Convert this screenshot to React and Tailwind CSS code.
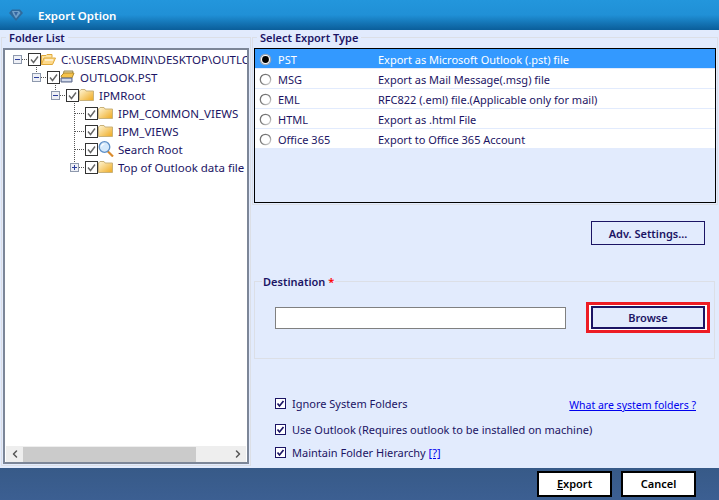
import { ChevronLeft, ChevronRight } from 'lucide-react';

const EXPORT_TYPES = [
  { name: 'PST', desc: 'Export as Microsoft Outlook (.pst) file', selected: true },
  { name: 'MSG', desc: 'Export as Mail Message(.msg) file' },
  { name: 'EML', desc: 'RFC822 (.eml) file.(Applicable only for mail)' },
  { name: 'HTML', desc: 'Export as .html File' },
  { name: 'Office 365', desc: 'Export to Office 365 Account' },
];

const TREE = [
  { level: 0, label: 'C:\\USERS\\ADMIN\\DESKTOP\\OUTLOOK', icon: 'open', toggle: '-' },
  { level: 1, label: 'OUTLOOK.PST', icon: 'pst', toggle: '-' },
  { level: 2, label: 'IPMRoot', icon: 'folder', toggle: '-' },
  { level: 3, label: 'IPM_COMMON_VIEWS', icon: 'folder' },
  { level: 3, label: 'IPM_VIEWS', icon: 'folder' },
  { level: 3, label: 'Search Root', icon: 'search' },
  { level: 3, label: 'Top of Outlook data file', icon: 'folder', toggle: '+' },
];

function TitleIcon() {
  return (
    <svg width="16" height="16" viewBox="0 0 16 16" className="shrink-0">
      <path d="M1 6 L4 2.5 H12 L15 6 L8 14 Z" fill="#2f6a9c" />
      <path d="M4 4 H11 L12.5 6 L8 11.5 L5 7 Z" fill="#6f9fc9" />
      <path d="M6 5 H10 L8 9 Z" fill="#3566a0" />
    </svg>
  );
}

function Toggle({ sign }) {
  return (
    <svg width="9" height="9" viewBox="0 0 9 9" className="block shrink-0">
      <rect x="0.5" y="0.5" width="8" height="8" fill="#eef0f6" stroke="#8e99ad" />
      <path d="M2 4.5H7" stroke="#2c3f9c" />
      {sign === '+' && <path d="M4.5 2V7" stroke="#2c3f9c" />}
    </svg>
  );
}

function TreeCheck() {
  return (
    <svg width="13" height="13" viewBox="0 0 13 13" className="shrink-0">
      <rect x="0.5" y="0.5" width="12" height="12" fill="#fff" stroke="#333" />
      <path d="M3 6.5 L5.5 9.5 L10 3.5" fill="none" stroke="#666" strokeWidth="1.4" />
    </svg>
  );
}

function NodeIcon({ type }) {
  if (type === 'open') {
    return (
      <svg width="15" height="13" viewBox="0 0 15 13" className="shrink-0">
        <path d="M0.5 11.5V2.5H5L6 1.5H11V4.5" fill="#fde3a0" stroke="#e0a93a" />
        <path d="M0.5 11.5L3 5H14.5L11.5 11.5Z" fill="#fdd98a" stroke="#e0a93a" />
        <path d="M4 7H12" stroke="#fff" />
      </svg>
    );
  }
  if (type === 'pst') {
    return (
      <svg width="15" height="14" viewBox="0 0 15 14" className="shrink-0">
        <path d="M4 1H13L12 5H3Z" fill="#e9d9a6" stroke="#9b8a55" />
        <path d="M1 6L4 3H14L12 8H2Z" fill="#f6c34b" stroke="#b18a2c" />
        <path d="M1 8H12V12H1Z" fill="#a9b7d6" stroke="#5e6b8a" />
        <path d="M2 10H11" stroke="#fff" />
      </svg>
    );
  }
  if (type === 'search') {
    return (
      <svg width="16" height="16" viewBox="0 0 16 16" className="shrink-0">
        <path d="M9.5 10L15 15.5" stroke="#d98a2b" strokeWidth="2.2" />
        <circle cx="6.5" cy="6" r="5.3" fill="#d5e9fb" stroke="#5d8fc7" strokeWidth="1.3" />
        <path d="M3.5 5.5A3 3 0 0 1 6.5 3" stroke="#fff" strokeWidth="1.2" fill="none" />
      </svg>
    );
  }
  return (
    <svg width="15" height="12" viewBox="0 0 15 12" className="shrink-0">
      <defs>
        <linearGradient id="folderFill" x1="0" y1="0" x2="1" y2="1">
          <stop offset="0" stopColor="#fff6d6" />
          <stop offset="1" stopColor="#eea91e" />
        </linearGradient>
      </defs>
      <path d="M0.5 11.5V2L2 0.5H6L7 2H14.5V11.5Z" fill="url(#folderFill)" stroke="#c9b27a" />
    </svg>
  );
}

function Legend({ children }) {
  return <legend className="ml-[3px] px-[3px] text-[11px] leading-[13px] font-semibold text-[#1b1464]">{children}</legend>;
}

function FolderTree() {
  return (
    <div className="relative flex-1 min-h-0 bg-white border-2 border-[#7c8698] flex flex-col overflow-hidden">
      {/* connector lines of the tree */}
      <svg className="absolute left-0 top-0 pointer-events-none" width="120" height="130">
        <g stroke="#555" strokeDasharray="1 1" fill="none">
          <path d="M17 9.5H23" />
          <path d="M31.5 15V22" />
          <path d="M36 27.5H42" />
          <path d="M50.5 33V41" />
          <path d="M55 45.5H61" />
          <path d="M69.5 53V113" />
          <path d="M70 63.5H80" />
          <path d="M70 81.5H80" />
          <path d="M70 99.5H80" />
          <path d="M74 117.5H80" />
        </g>
      </svg>
      <div className="flex-1 min-h-0">
        {TREE.map((n) => (
          <div key={n.label} className={`relative flex items-center whitespace-nowrap h-[18px] ${n.level === 0 ? 'pl-[8px]' : n.level === 1 ? 'pl-[27px]' : n.level === 2 ? 'pl-[46px]' : 'pl-[65px]'}`}>
            <span className="w-[15px] shrink-0">{n.toggle && <Toggle sign={n.toggle} />}</span>
            <TreeCheck />
            <span className="w-[15px] shrink-0 flex justify-center"><NodeIcon type={n.icon} /></span>
            <span className="ml-[5px] text-[11.5px] text-[#1b1464]">{n.label}</span>
          </div>
        ))}
      </div>
      <div className="relative h-[16px] mx-[1px] bg-[#eeeeee] flex items-center shrink-0">
        <div className="w-[17px] flex justify-center"><ChevronLeft size={12} strokeWidth={3} className="text-[#555]" /></div>
        <div className="w-[173px] h-[15px] bg-[#cbcbcb]" />
        <div className="flex-1" />
        <div className="w-[17px] flex justify-center"><ChevronRight size={12} strokeWidth={3} className="text-[#555]" /></div>
      </div>
    </div>
  );
}

function Radio({ on }) {
  return (
    <svg width="13" height="13" viewBox="0 0 13 13" className="shrink-0">
      <defs>
        <linearGradient id="radioRing" x1="0" y1="0" x2="1" y2="1">
          <stop offset="0" stopColor="#666" />
          <stop offset="0.55" stopColor="#888" />
          <stop offset="1" stopColor="#e4e4e4" />
        </linearGradient>
      </defs>
      <circle cx="6.5" cy="6.5" r="5.2" fill="#fff" stroke={on ? '#9aa7b8' : 'url(#radioRing)'} strokeWidth="1.3" />
      {on && <circle cx="6.5" cy="6.5" r="3.4" fill="#000" />}
    </svg>
  );
}

function OptionCheck() {
  return (
    <svg width="11" height="11" viewBox="0 0 11 11" className="shrink-0">
      <rect x="0.5" y="0.5" width="10" height="10" fill="#fff" stroke="#1b1464" />
      <path d="M2.5 5.5L4.5 8L8.5 3" fill="none" stroke="#1b1464" strokeWidth="1.7" />
    </svg>
  );
}

export default function App() {
  return (
    <div className="w-[719px] h-[500px] flex flex-col overflow-hidden bg-[#e2ebfd] text-[11px] leading-[13px] text-[#1b1464] font-['Noto_Sans',sans-serif]">
      <div className="h-[30px] shrink-0 flex items-center pl-[8px] gap-[14px] bg-gradient-to-b from-[#2396dc] via-[#2090d6] via-50% to-[#0a5e9a]">
        <TitleIcon />
        <span className="text-white text-[11.5px] font-semibold">Export Option</span>
      </div>

      <div className="flex-1 min-h-0 flex">
        <div className="w-[251px] shrink-0 pl-[1px] pt-[1px] pb-[2px] min-w-0">
          <fieldset className="h-full min-w-0 w-full border border-[#dcdfe6] px-[1px] pt-[4px] pb-[1px] flex flex-col min-h-0">
            <Legend>Folder List</Legend>
            <FolderTree />
          </fieldset>
        </div>

        <div className="flex-1 min-w-0 pl-[1px] pr-[1px] pt-[1px] flex flex-col">
          <fieldset className="border border-[#dcdfe6] px-[1px] pt-[4px] pb-[1px]">
            <Legend>Select Export Type</Legend>
            <div className="h-[155px] bg-[#e2ebfd] border border-black">
              {EXPORT_TYPES.map((t) => (
                <div key={t.name} className={`h-[20px] flex items-center pl-[4px] pt-[1px] border-b border-[#e2ebfd] ${t.selected ? 'bg-[#3399ff] text-white' : 'bg-white'}`}>
                  <Radio on={t.selected} />
                  <span className="w-[100px] ml-[6px] shrink-0">{t.name}</span>
                  <span>{t.desc}</span>
                </div>
              ))}
            </div>
          </fieldset>

          <div className="flex justify-end pr-[13px] mt-[16px]">
            <button className="w-[114px] h-[24px] border border-[#1b1464] font-semibold">Adv. Settings...</button>
          </div>

          <fieldset className="mt-[30px] ml-[2px] mr-[3px] h-[84px] border border-[#dcdfe6] pt-[14px] pl-[20px]">
            <legend className="ml-[-13px] px-[1px] text-[11px] leading-[13px] font-semibold">
              Destination <span className="text-[#ff0000]">*</span>
            </legend>
            <div className="flex items-center">
              <div className="w-[291px] h-[22px] bg-white border border-[#808080]" />
              <div className="ml-[20px] w-[124px] h-[31px] border-[3px] border-[#ed1c24] bg-white flex items-center justify-center">
                <button className="w-[114px] h-[23px] bg-[#e2ebfd] border-2 border-[#1b1464] font-semibold">Browse</button>
              </div>
            </div>
          </fieldset>

          <div className="mt-[38px] pl-[23px] flex flex-col">
            <div className="h-[13px] flex items-center gap-[6px] relative">
              <OptionCheck />
              <span>Ignore System Folders</span>
              <a className="absolute right-[22px] top-[2px] text-[10.5px] text-[#0000ee] underline">What are system folders ?</a>
            </div>
            <div className="h-[13px] mt-[13px] flex items-center gap-[6px]">
              <OptionCheck />
              <span>Use Outlook (Requires outlook to be installed on machine)</span>
            </div>
            <div className="h-[13px] mt-[10px] flex items-center gap-[6px]">
              <OptionCheck />
              <span>Maintain Folder Hierarchy <a className="text-[#0000ee] underline">[?]</a></span>
            </div>
          </div>
        </div>
      </div>

      <div className="h-[32px] shrink-0 bg-gradient-to-b from-[#375a88] to-[#3c5f92] flex items-center justify-end gap-[9px] pr-[23px] pb-[1px]">
        <button className="w-[75px] h-[26px] bg-white border-2 border-black text-black font-semibold"><span className="underline">E</span>xport</button>
        <button className="w-[75px] h-[26px] bg-white border-2 border-black text-black font-semibold">Cancel</button>
      </div>
    </div>
  );
}
